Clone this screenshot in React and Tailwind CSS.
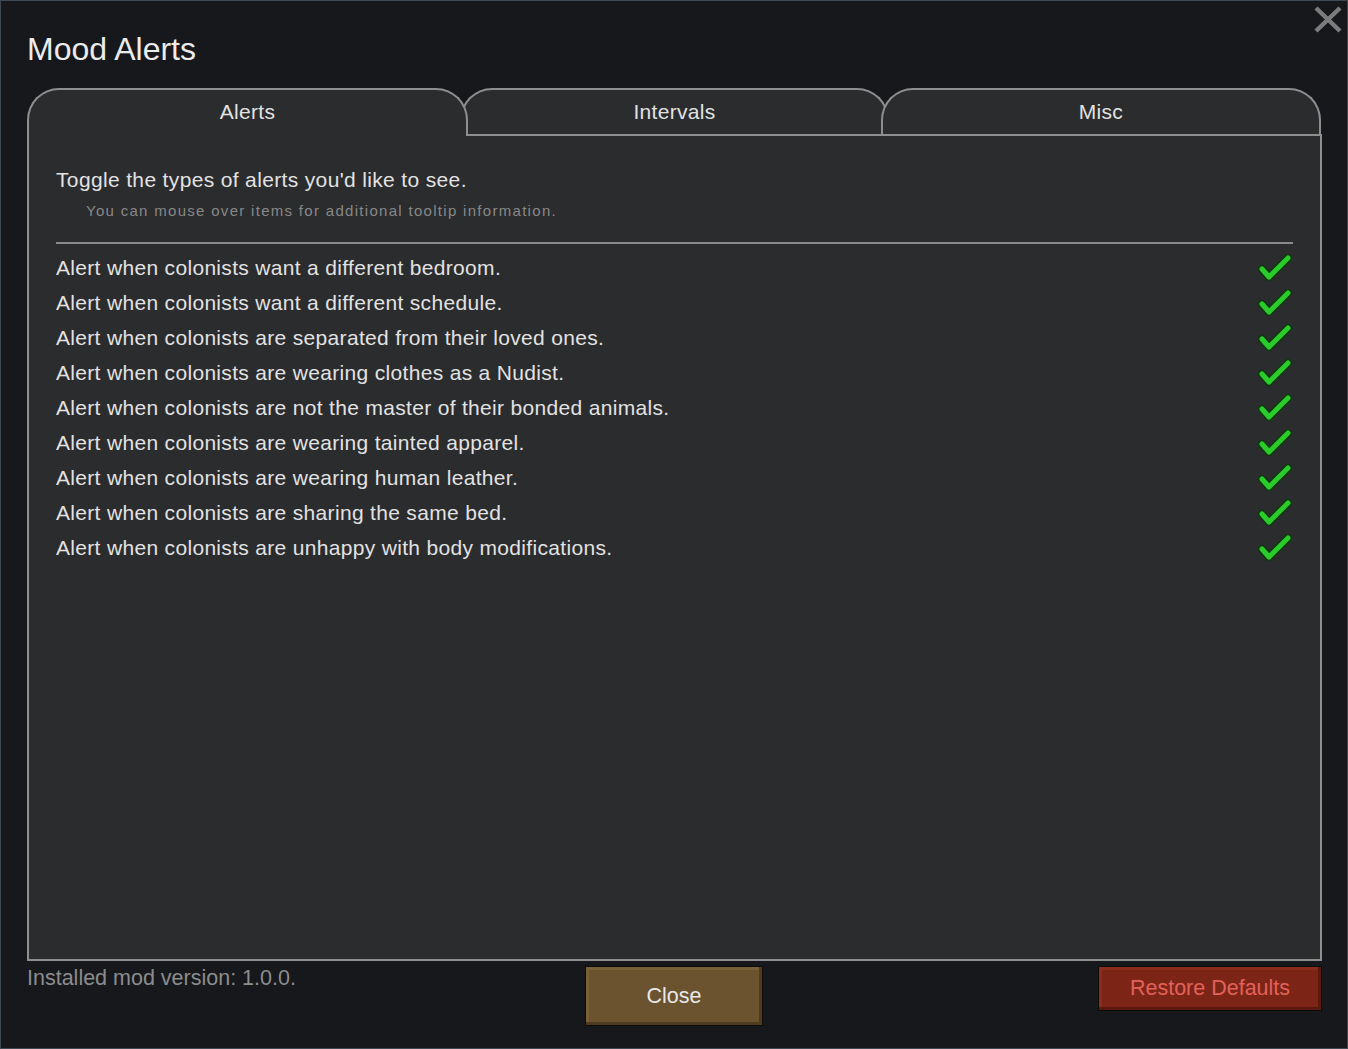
const alerts = [
  'Alert when colonists want a different bedroom.',
  'Alert when colonists want a different schedule.',
  'Alert when colonists are separated from their loved ones.',
  'Alert when colonists are wearing clothes as a Nudist.',
  'Alert when colonists are not the master of their bonded animals.',
  'Alert when colonists are wearing tainted apparel.',
  'Alert when colonists are wearing human leather.',
  'Alert when colonists are sharing the same bed.',
  'Alert when colonists are unhappy with body modifications.',
];

function Check() {
  return (
    <svg width="36" height="32" viewBox="0 0 36 32">
      <polyline points="5,17 12,25 31,6" fill="none" stroke="#0c3a0c" strokeWidth="8" strokeLinecap="round" strokeLinejoin="round" />
      <polyline points="5,17 12,25 31,6" fill="none" stroke="#2bcb2b" strokeWidth="5" strokeLinecap="round" strokeLinejoin="round" />
    </svg>
  );
}

export default function App() {
  return (
    <div
      className="w-[1348px] h-[1049px] bg-[#16181c] border border-[#3e4853] relative pl-[26px] pr-[25px] text-[#e2e2e2]"
      style={{ fontFamily: '"Liberation Sans", Arial, sans-serif' }}
    >
      {/* close X */}
      <svg className="absolute top-[5px] right-[5px]" width="28" height="27" viewBox="0 0 28 27">
        <path d="M2 2 L26 25 M26 2 L2 25" stroke="#7c7c7c" strokeWidth="4.5" />
      </svg>

      <h1 className="mt-[28px] text-[32px] leading-[40px] text-[#ececec]">Mood Alerts</h1>

      {/* tabs */}
      <div className="mt-[19px] flex h-[46px] items-start text-[21px] tracking-[0.3px]">
        <div className="relative z-10 w-[441px] h-[48px] pb-[3px] flex items-center justify-center bg-[#2b2c2e] border-2 border-b-0 border-[#8e8e8e] rounded-t-[32px]">
          Alerts
        </div>
        <div className="-ml-[8px] w-[429px] h-[46px] pb-[1px] flex items-center justify-center bg-[#2b2c2e] border-2 border-b-0 border-[#8e8e8e] rounded-t-[32px]">
          Intervals
        </div>
        <div className="relative z-10 -ml-[8px] w-[440px] h-[46px] pb-[1px] flex items-center justify-center bg-[#2b2c2e] border-2 border-b-0 border-[#8e8e8e] rounded-t-[32px]">
          Misc
        </div>
      </div>

      {/* panel */}
      <div className="h-[827px] bg-[#2b2c2e] border-2 border-[#8e8e8e] pt-[32px] pl-[27px] pr-[27px]">
        <p className="text-[21px] leading-[24px] tracking-[0.35px]">Toggle the types of alerts you'd like to see.</p>
        <p className="mt-[9px] pl-[30px] text-[15px] leading-[20px] tracking-[1.3px] text-[#888888]">
          You can mouse over items for additional tooltip information.
        </p>
        <div className="mt-[21px] h-[2px] bg-[#8a8a8a]" />
        <div className="mt-[6px]">
          {alerts.map((a) => (
            <div key={a} className="h-[35px] flex items-center justify-between">
              <span className="text-[21px] tracking-[0.32px]">{a}</span>
              <Check />
            </div>
          ))}
        </div>
      </div>

      {/* footer */}
      <div className="mt-[5px] flex items-start">
        <div className="w-[558px] text-[21.5px] leading-[24px] text-[#8c8c8c]">Installed mod version: 1.0.0.</div>
        <button className="w-[178px] h-[60px] bg-[#6b5330] border border-[#0c0c0c] shadow-[inset_-3px_-3px_0_#4e3b20,inset_3px_3px_0_#7a6039] text-[21.5px] text-[#e8e8e8]">
          Close
        </button>
        <button className="ml-auto w-[224px] h-[45px] bg-[#7c2517] border border-[#0c0c0c] shadow-[inset_-3px_-3px_0_#5c190f,inset_3px_3px_0_#8a2d1d] text-[21.5px] text-[#e2615b]">
          Restore Defaults
        </button>
      </div>
    </div>
  );
}
